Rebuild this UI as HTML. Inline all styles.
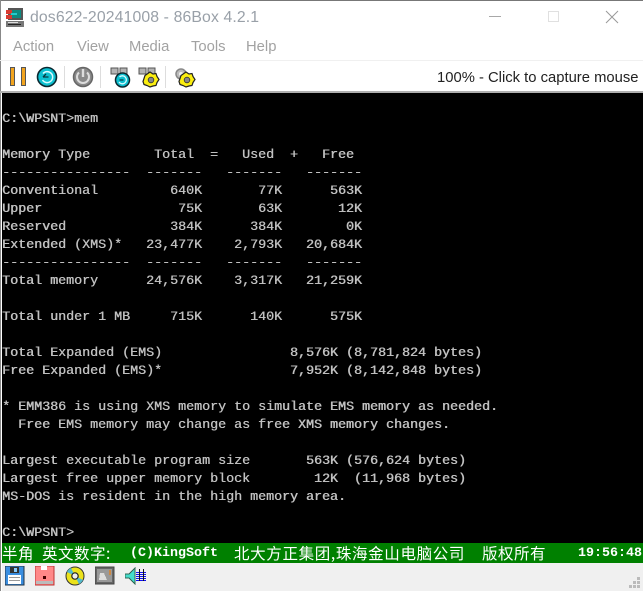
<!DOCTYPE html>
<html><head><meta charset="utf-8"><style>
html,body{margin:0;padding:0;background:#fff}
#w{position:relative;width:643px;height:591px;overflow:hidden;background:#fff;font-family:"Liberation Sans",sans-serif}
.a{position:absolute;white-space:pre}
#t{left:2px;top:111px;margin:0;font:13.333px/18px "Liberation Mono",monospace;color:#c0c0c0;text-shadow:.45px 0 0 #c0c0c0}
.m{top:38px;font-size:14.8px;line-height:18px;color:#a2a2a2}
.c{top:544px;font:15.5px/18px "WenQuanYi Zen Hei","Noto Sans CJK SC",sans-serif;color:#fff}
.l{top:545px;font:bold 13.333px/18px "Liberation Mono",monospace;color:#fff}
svg{position:absolute;shape-rendering:crispEdges}
svg.s{shape-rendering:auto}
</style></head><body><div id="w">
<div class="a" style="left:0;top:0;width:643px;height:1px;background:#777"></div>
<div class="a" style="left:0;top:0;width:1px;height:591px;background:#888"></div>

<svg style="left:5px;top:7px" width="20" height="21" viewBox="0 0 20 21">
<rect x="3" y="1" width="15" height="12" fill="#555"/><rect x="5" y="3" width="11" height="8" fill="#0d8a80"/>
<rect x="1" y="3" width="6" height="4" fill="#d83a30"/><rect x="1" y="8" width="6" height="4" fill="#d83a30"/><rect x="6" y="6" width="6" height="2" fill="#2cc"/>
<rect x="1" y="14" width="18" height="6" fill="#777"/><rect x="3" y="15" width="10" height="1" fill="#ddd"/><rect x="3" y="17" width="13" height="1" fill="#222"/>
</svg>
<div class="a" style="left:30px;top:8px;font-size:15.8px;line-height:20px;color:#99a0a8;letter-spacing:.12px">dos622-20241008 - 86Box 4.2.1</div>

<svg class="s" style="left:488px;top:5px" width="150" height="24" viewBox="0 0 150 24">
<path d="M1 11.5H13" stroke="#a8a8a8" fill="none"/>
<rect x="60.5" y="6.5" width="10" height="10" stroke="#e0e0e0" fill="none"/>
<path d="M118 6L130 18M130 6L118 18" stroke="#999" fill="none"/>
</svg>

<div class="a m" style="left:13px">Action</div>
<div class="a m" style="left:77px">View</div>
<div class="a m" style="left:129px">Media</div>
<div class="a m" style="left:191px">Tools</div>
<div class="a m" style="left:246px">Help</div>
<div class="a" style="left:0;top:60px;width:643px;height:1px;background:#f0f0f0"></div>

<svg style="left:9px;top:66px" width="18" height="21" viewBox="0 0 18 21">
<rect x="1" y="1" width="5" height="19" fill="#555"/><rect x="2" y="2" width="3" height="17" fill="#f2a41e"/>
<rect x="12" y="1" width="5" height="19" fill="#555"/><rect x="13" y="2" width="3" height="17" fill="#f2a41e"/>
</svg>
<svg class="s" style="left:36px;top:66px" width="22" height="22" viewBox="0 0 22 22">
<circle cx="11" cy="11" r="9.5" fill="#0cc0d0" stroke="#0a2830" stroke-width="1.600"/>
<path d="M7 7.5A5.5 5.5 0 1 1 6.5 14" fill="none" stroke="#d8fbff" stroke-width="1.500"/>
<path d="M7 11H12.500M7 11l3-3" fill="none" stroke="#063840" stroke-width="1.300"/>
</svg>
<div class="a" style="left:64px;top:66px;width:1px;height:22px;background:#ddd"></div>
<svg class="s" style="left:72px;top:66px" width="22" height="22" viewBox="0 0 22 22">
<circle cx="11" cy="11" r="9.5" fill="#8a8a8a" stroke="#666" stroke-width="1.5"/>
<path d="M7 6.5A6 6 0 1 0 15 6.5" fill="none" stroke="#ddd" stroke-width="2"/>
<path d="M11 3V11" stroke="#ddd" stroke-width="2.4"/>
</svg>
<div class="a" style="left:100px;top:66px;width:1px;height:22px;background:#ddd"></div>
<svg class="s" style="left:110px;top:67px" width="22" height="21" viewBox="0 0 22 21">
<rect x="1" y="1" width="7" height="6" fill="#b4b4b4" stroke="#555"/><rect x="10" y="1" width="7" height="6" fill="#b4b4b4" stroke="#555"/>
<circle cx="12.500" cy="13" r="7" fill="#0cc0d0" stroke="#0a2830" stroke-width="1.500"/>
<path d="M9.500 10A4 4 0 1 1 9 15" fill="none" stroke="#d8fbff" stroke-width="1.300"/><path d="M9.500 13h4" stroke="#063840" stroke-width="1.200"/>
</svg>
<svg class="s" style="left:138px;top:67px" width="22" height="21" viewBox="0 0 22 21">
<rect x="1" y="1" width="7" height="6" fill="#b4b4b4" stroke="#555"/><rect x="10" y="1" width="7" height="6" fill="#b4b4b4" stroke="#555"/>
<path d="M12 5l3 2 3-.5 1 3 2 3-2 3-1 3-3 .5-3 1-3-1.500-3-1-1-3 1-3 1-3z" fill="#fbee10" stroke="#222" stroke-width="1.200"/>
<circle cx="13" cy="13" r="2.800" fill="#888" stroke="#333" stroke-width=".8"/>
</svg>
<div class="a" style="left:165px;top:66px;width:1px;height:22px;background:#ddd"></div>
<svg class="s" style="left:174px;top:67px" width="22" height="21" viewBox="0 0 22 21">
<circle cx="7" cy="7" r="5" fill="#bbb" stroke="#888" stroke-width="1.500"/><circle cx="7" cy="7" r="2" fill="#eee"/>
<path d="M12 5l3 2 3-.5 1 3 2 3-2 3-1 3-3 .5-3 1-3-1.500-3-1-1-3 1-3 1-3z" fill="#fbee10" stroke="#222" stroke-width="1.200"/>
<circle cx="13" cy="13" r="2.800" fill="#888" stroke="#333" stroke-width=".8"/>
</svg>

<div class="a" style="left:437px;top:69px;font-size:14.8px;line-height:18px;color:#222">100% - Click to capture mouse</div>
<div class="a" style="left:0;top:91px;width:643px;height:2px;background:#b0b0b0"></div>

<div class="a" style="left:2px;top:93px;width:641px;height:450px;background:#000"></div>
<pre class="a" id="t">C:\WPSNT&gt;mem

Memory Type        Total  =   Used  +   Free
----------------  -------   -------   -------
Conventional         640K       77K      563K
Upper                 75K       63K       12K
Reserved             384K      384K        0K
Extended (XMS)*   23,477K    2,793K   20,684K
----------------  -------   -------   -------
Total memory      24,576K    3,317K   21,259K

Total under 1 MB     715K      140K      575K

Total Expanded (EMS)                8,576K (8,781,824 bytes)
Free Expanded (EMS)*                7,952K (8,142,848 bytes)

* EMM386 is using XMS memory to simulate EMS memory as needed.
  Free EMS memory may change as free XMS memory changes.

Largest executable program size       563K (576,624 bytes)
Largest free upper memory block        12K  (11,968 bytes)
MS-DOS is resident in the high memory area.

C:\WPSNT&gt;</pre>

<div class="a" style="left:2px;top:543px;width:641px;height:20px;background:#008000"></div>
<div class="a c" style="left:2px;letter-spacing:.5px">半角</div>
<div class="a c" style="left:42px;letter-spacing:.5px">英文数字:</div>
<div class="a l" style="left:130px">(C)KingSoft</div>
<div class="a c" style="left:234px;letter-spacing:.65px">北大方正集团,珠海金山电脑公司</div>
<div class="a c" style="left:482px;letter-spacing:.5px">版权所有</div>
<div class="a l" style="left:578px">19:56:48</div>
<div class="a" style="left:2px;top:563px;width:641px;height:28px;background:#f0f0f0"></div>

<svg style="left:5px;top:566px" width="20" height="20" viewBox="0 0 20 20">
<rect x="0" y="0" width="19" height="19" fill="#3a8ee0" stroke="#234"/><rect x="5" y="1" width="9" height="6" fill="#333"/><rect x="9" y="2" width="3" height="4" fill="#8cf"/>
<rect x="3" y="9" width="13" height="9" fill="#fff"/><rect x="4" y="11" width="11" height="1" fill="#999"/><rect x="4" y="14" width="11" height="1" fill="#999"/>
</svg>
<svg style="left:35px;top:566px" width="20" height="20" viewBox="0 0 20 20">
<rect x="0" y="0" width="19" height="19" fill="#f88" stroke="#b33"/><rect x="6" y="0" width="6" height="4" fill="#fff"/><rect x="8" y="10" width="3" height="3" fill="#400"/><rect x="1" y="15" width="17" height="3" fill="#bbb"/>
</svg>
<svg class="s" style="left:65px;top:566px" width="20" height="20" viewBox="0 0 20 20">
<circle cx="10" cy="10" r="9" fill="#ece21c" stroke="#333"/><path d="M10 10L2 6A9 9 0 0 1 6 2Z" fill="#5bc"/><path d="M10 10L18 14A9 9 0 0 1 14 18Z" fill="#5bc"/><circle cx="10" cy="10" r="3.200" fill="#eee" stroke="#222" stroke-width="1.200"/>
</svg>
<svg style="left:95px;top:566px" width="20" height="20" viewBox="0 0 20 20">
<rect x="0" y="1" width="19" height="17" fill="#666" stroke="#444"/><rect x="2" y="3" width="15" height="13" fill="#999"/><path d="M4 14L5 7H9L12 14Z" fill="#ddd"/><rect x="14" y="4" width="2" height="5" fill="#c84"/>
</svg>
<svg style="left:125px;top:566px" width="22" height="20" viewBox="0 0 22 20">
<path d="M0 8H4L10 2V18L4 12H0Z" fill="#4dc" stroke="#365"/>
<rect x="11" y="6" width="10" height="1" fill="#11e"/><rect x="11" y="8" width="10" height="1" fill="#11e"/><rect x="11" y="10" width="10" height="1" fill="#11e"/><rect x="11" y="12" width="10" height="1" fill="#11e"/><rect x="11" y="14" width="10" height="1" fill="#11e"/>
<rect x="14" y="3" width="1" height="12" fill="#111"/><rect x="18" y="3" width="1" height="12" fill="#111"/>
</svg>
<svg style="left:628px;top:576px" width="14" height="14" viewBox="0 0 14 14">
<g fill="#bbb"><rect x="9" y="1" width="3" height="3"/><rect x="5" y="5" width="3" height="3"/><rect x="9" y="5" width="3" height="3"/><rect x="1" y="9" width="3" height="3"/><rect x="5" y="9" width="3" height="3"/><rect x="9" y="9" width="3" height="3"/></g>
</svg>
</div></body></html>
